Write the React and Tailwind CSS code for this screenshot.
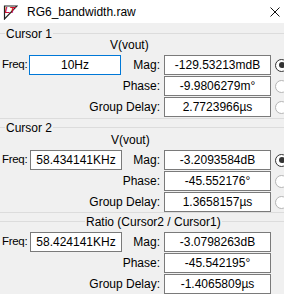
import React from 'react';

function LtLogo() {
    return (
        <svg width="15" height="16" viewBox="0 0 15 16" className="shrink-0">
            <polygon points="1.5,2 14,2 1.5,15" fill="#fff" stroke="#222" strokeWidth="1.2" />
            <text x="1.5" y="8.5" fontSize="9.5" fontWeight="bold" fontStyle="italic" fill="#c8102e" fontFamily="Liberation Sans, sans-serif">LT</text>
        </svg>
    );
}

function Radio({ checked }) {
    return (
        <div
            className={
                checked
                    ? 'flex h-[13px] w-[13px] items-center justify-center rounded-full border border-[#333] bg-white'
                    : 'h-[13px] w-[13px] rounded-full border border-[#b4b4b4] bg-white'
            }
        >
            {checked && <div className="h-[6px] w-[6px] rounded-full bg-[#333]" />}
        </div>
    );
}

function GroupHeader({ label, leftWidth = 'w-[5px]' }) {
    return (
        <div className="flex h-[11px] items-center">
            <div className={`h-px ${leftWidth} bg-[#dcdcdc]`} />
            <span className="px-px leading-none">{label}</span>
            <div className="h-px flex-1 bg-[#dcdcdc]" />
        </div>
    );
}

function Field({ value, focused, width = 'w-[107px]' }) {
    return (
        <div
            className={`flex h-[20px] ${width} shrink-0 items-center justify-center border bg-white leading-none ${
                focused ? 'border-[#0078d7]' : 'border-[#7a7a7a]'
            }`}
        >
            {value}
        </div>
    );
}

function Row({ freq, freqFocused, freqPad = 'w-[29px]', label, value, radio }) {
    return (
        <div className="flex h-[20px] items-center">
            {freq && (
                <div className="flex w-[124px] items-center">
                    <span className={`${freqPad} shrink-0 whitespace-nowrap pl-[2px] text-[11.5px] tracking-[-0.3px]`}>Freq:</span>
                    <Field value={freq} focused={freqFocused} width="w-[92px]" />
                </div>
            )}
            <div className="flex-1 pr-[4px] text-right whitespace-nowrap">{label}</div>
            <Field value={value} />
            <div className="ml-[4px] w-[13px]">{radio !== undefined && <Radio checked={radio} />}</div>
        </div>
    );
}

function CursorRows({ freq, freqFocused, freqPad, rows }) {
    return (
        <div className="flex flex-col gap-px">
            <Row freq={freq} freqFocused={freqFocused} freqPad={freqPad} label="Mag:" value={rows[0]} radio={rows[3]} />
            <Row label="Phase:" value={rows[1]} radio={rows[4]} />
            <Row label="Group Delay:" value={rows[2]} radio={rows[5]} />
        </div>
    );
}

export default function App() {
    return (
        <div className="h-[294px] w-[284px] overflow-hidden bg-[#f0f0f0] font-['Liberation_Sans',Arial,sans-serif] text-[12px] text-black">
            {/* Title bar */}
            <div className="flex h-[23px] items-center bg-white pl-[3px] pr-[4px]">
                <LtLogo />
                <span className="ml-[9px] flex-1 text-[12px]">RG6_bandwidth.raw</span>
                <svg width="10" height="10" viewBox="0 0 10 10">
                    <path d="M0.5 0.5 L9.5 9.5 M9.5 0.5 L0.5 9.5" stroke="#111" strokeWidth="1" />
                </svg>
            </div>

            <div className="w-[288px]">
                {/* Cursor 1 */}
                <div className="mt-[5px]">
                    <GroupHeader label="Cursor 1" />
                    <div className="h-[12px] pl-[110px] leading-[12px]">V(vout)</div>
                    <div className="mt-[4px]">
                        <CursorRows
                            freq="10Hz"
                            freqFocused
                            rows={['-129.53213mdB', '-9.9806279m°', '2.7723966µs', true, false, false]}
                        />
                    </div>
                    <div className="mt-px h-px bg-[#dcdcdc]" />
                </div>

                {/* Cursor 2 */}
                <div className="mt-[3px]">
                    <GroupHeader label="Cursor 2" />
                    <div className="mt-px h-[12px] pl-[111px] leading-[12px]">V(vout)</div>
                    <div className="mt-[4px]">
                        <CursorRows
                            freq="58.434141KHz"
                            freqPad="w-[30px]"
                            rows={['-3.2093584dB', '-45.552176°', '1.3658157µs', true, false, false]}
                        />
                    </div>
                    <div className="h-px bg-[#dcdcdc]" />
                </div>

                {/* Ratio */}
                <div className="mt-[3px]">
                    <GroupHeader label="Ratio (Cursor2 / Cursor1)" leftWidth="w-[85px]" />
                    <div className="mt-[5px]">
                        <CursorRows
                            freq="58.424141KHz"
                            freqPad="w-[30px]"
                            rows={['-3.0798263dB', '-45.542195°', '-1.4065809µs']}
                        />
                    </div>
                </div>
            </div>
        </div>
    );
}
